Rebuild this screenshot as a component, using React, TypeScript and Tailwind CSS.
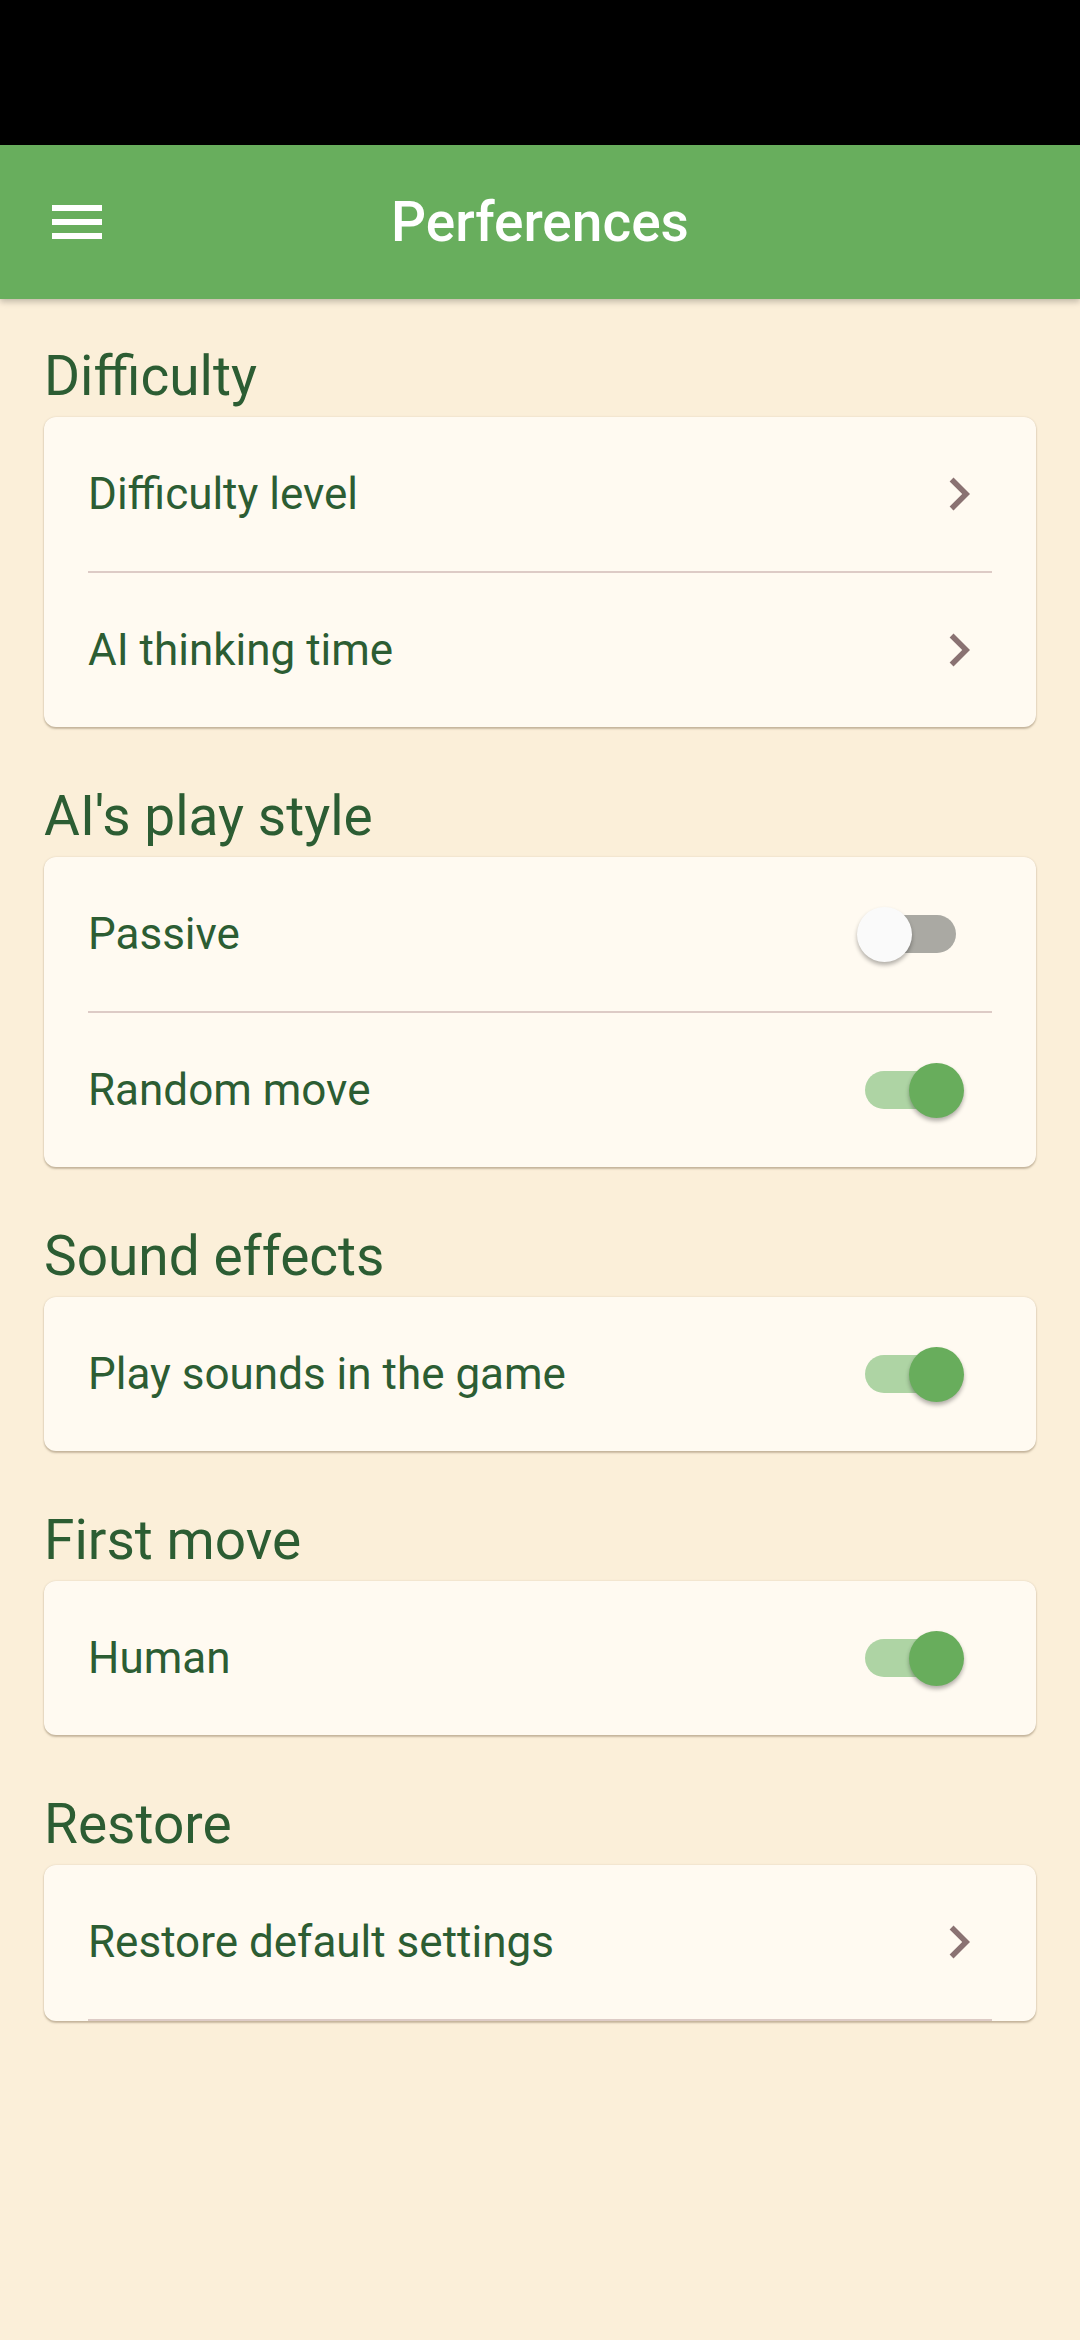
import React, { useState } from 'react';

const Chevron: React.FC = () => (
  <svg viewBox="0 0 24 24" className="w-[66px] h-[66px]" fill="#8a7272">
    <path d="M10 6L8.59 7.41 13.17 12l-4.58 4.59L10 18l6-6z" />
  </svg>
);

const Toggle: React.FC<{ on: boolean; onChange: () => void }> = ({ on, onChange }) => (
  <button onClick={onChange} className="relative w-[107px] h-[55px] mr-[28px] shrink-0">
    <span
      className={`absolute left-[8px] top-[8.5px] w-[91px] h-[38px] rounded-full ${on ? 'bg-[#aed4a4]' : 'bg-[#aaa9a3]'}`}
    />
    <span
      className={`absolute top-0 w-[55px] h-[55px] rounded-full shadow-[0_3px_4px_rgba(0,0,0,0.3)] ${on ? 'right-0 bg-[#68ad5c]' : 'left-0 bg-[#fafafa]'}`}
    />
  </button>
);

const Divider: React.FC = () => <div className="mx-[44px] h-[2px] bg-[#ddcbc6]" />;

const Row: React.FC<{ label: string; children?: React.ReactNode }> = ({ label, children }) => (
  <div className="h-[154px] flex items-center justify-between pl-[44px] pr-[44px]">
    <span className="text-[44px] leading-none text-[#2c5d33]">{label}</span>
    {children}
  </div>
);

const Section: React.FC<{ title: string; first?: boolean; children: React.ReactNode }> = ({ title, first, children }) => (
  <section className={first ? 'mt-[45px]' : 'mt-[57px]'}>
    <h2 className="px-[44px] text-[55px] leading-[64px] font-normal text-[#2c5d33]">{title}</h2>
    <div className="mt-[9px] mx-[44px] rounded-[12px] bg-[#fffaf1] overflow-hidden shadow-[0_2px_2px_rgba(110,90,60,0.35),0_0_2px_rgba(110,90,60,0.2)]">
      {children}
    </div>
  </section>
);

export default function App() {
  const [passive, setPassive] = useState(false);
  const [random, setRandom] = useState(true);
  const [sounds, setSounds] = useState(true);
  const [human, setHuman] = useState(true);

  return (
    <div className="min-h-screen bg-[#fbefd9]" style={{ fontFamily: 'Roboto, "Noto Sans", sans-serif' }}>
      {/* status bar */}
      <div className="h-[145px] bg-black" />

      {/* app bar */}
      <header className="relative h-[154px] bg-[#68ae5d] flex items-center shadow-[0_3px_6px_rgba(0,0,0,0.22)]">
        <button className="ml-[44px] w-[66px] h-[66px] flex flex-col justify-center items-center gap-[8px]">
          <span className="block w-[50px] h-[6px] bg-white" />
          <span className="block w-[50px] h-[6px] bg-white" />
          <span className="block w-[50px] h-[6px] bg-white" />
        </button>
        <h1 className="absolute inset-x-0 text-center text-[55px] font-medium text-white pointer-events-none">
          Perferences
        </h1>
      </header>

      <main className="pb-[40px]">
        <Section title="Difficulty" first>
          <Row label="Difficulty level">
            <Chevron />
          </Row>
          <Divider />
          <Row label="AI thinking time">
            <Chevron />
          </Row>
        </Section>

        <Section title="AI's play style">
          <Row label="Passive">
            <Toggle on={passive} onChange={() => setPassive(!passive)} />
          </Row>
          <Divider />
          <Row label="Random move">
            <Toggle on={random} onChange={() => setRandom(!random)} />
          </Row>
        </Section>

        <Section title="Sound effects">
          <Row label="Play sounds in the game">
            <Toggle on={sounds} onChange={() => setSounds(!sounds)} />
          </Row>
        </Section>

        <Section title="First move">
          <Row label="Human">
            <Toggle on={human} onChange={() => setHuman(!human)} />
          </Row>
        </Section>

        <Section title="Restore">
          <Row label="Restore default settings">
            <Chevron />
          </Row>
          <Divider />
        </Section>
      </main>
    </div>
  );
}
